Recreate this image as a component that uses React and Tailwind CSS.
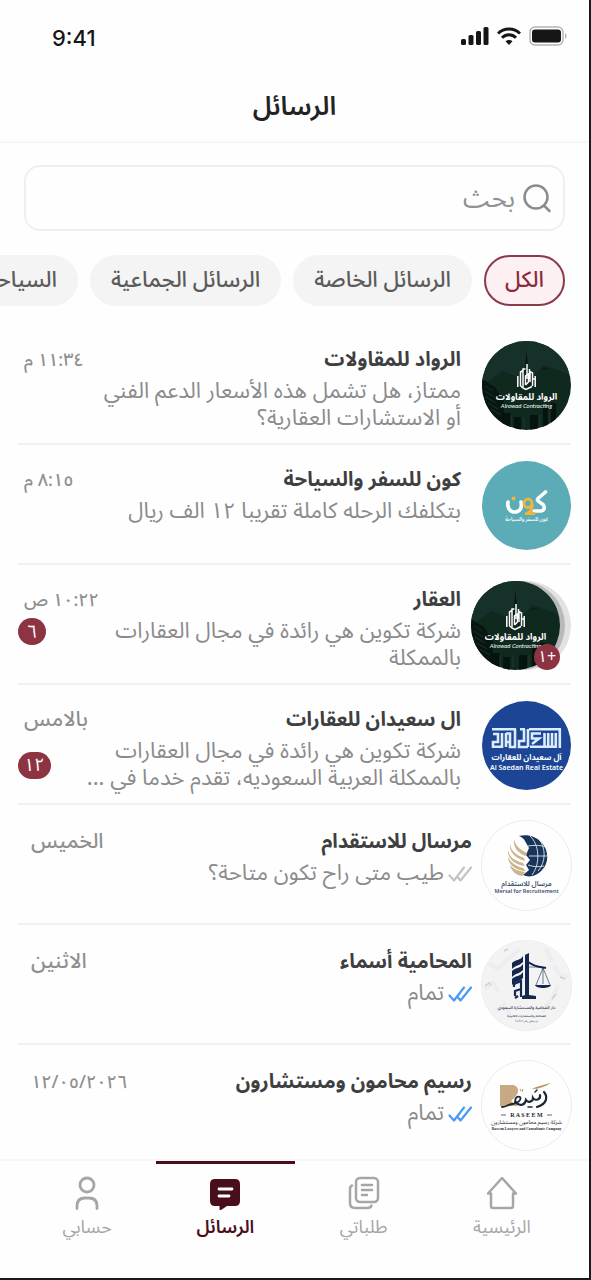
import { useState } from "react";

const filters = ["الكل", "الرسائل الخاصة", "الرسائل الجماعية", "السياحة"];

const RowadArt = () => (
    <>
        <rect width="89" height="89" fill="#10291f" />
        <path d="M0 0h89v34L62 24 47 40 20 30 0 46z" fill="#15312a" />
        <path d="M43 26l1.500-16 1.500 16v18h-3z" fill="#071511" />
        <path d="M38 44V30h13v14z" fill="#0c2019" />
        <path d="M0 38l13 8 9 14v29H0z" fill="#081611" />
        <path d="M3 45l8 5M3 50l9 6M4 56l10 6M6 62l10 6M9 68l10 6" stroke="#22392f" strokeWidth="0.800" />
        <path d="M20 72h9v17h-9zM32 76h7v13h-7zM48 74h8v15h-8zM61 66h5v23h-5zM69 62h5v27h-5z" fill="#07130f" />
        <path d="M29 74v12M42 76v10M58 74v12M67 70v12" stroke="#263f35" strokeWidth="0.800" />
        <path d="M59 29l3-2 2 1 2-1" stroke="#0b1d16" strokeWidth="1.500" fill="none" />
        <g stroke="#fff" strokeWidth="1.500" fill="none">
            <path d="M35.800 46V35M38.500 45V31l2.500-1.500M41 46V28h2.500M45 38V23M53.200 46V35M50.500 45V32l-2.500-1.500V41M47.500 28v10" />
            <path d="M41 47l3 1.500 6-3M43.500 44V35l3-2v8l-3 3M38.500 45l2.500 2M50.500 38h2.500" />
        </g>
        <text x="44.500" y="59" fontSize="9" fontWeight="700" fill="#fff" textAnchor="middle">الرواد للمقاولات</text>
        <text x="44.500" y="67" fontSize="6" fill="#fff" textAnchor="middle" fontFamily="Lato" fontStyle="italic">Alrowad Contracting</text>
    </>
);

const KawnArt = () => (
    <>
        <rect width="89" height="89" fill="#5cacb7" />
        <g fill="none" strokeWidth="3.600" strokeLinecap="round" strokeLinejoin="round">
            <path d="M63.500 31l-7 6c-2 2-1 3 1 4l3.500 2.500c2.500 3 1 6.500-2.500 6.500H52" stroke="#fff" />
            <path d="M26 41c-1 6 2 10 6.500 10s8-3 6.500-10" stroke="#fff" />
            <path d="M50 42.500c0-3-2-4.500-4-4.500s-4 2-4 4.500 2 4 4 4 4-2 4-4c1 5-1 9-6 10h8" stroke="#efb63c" strokeWidth="2.800" />
        </g>
        <circle cx="31.500" cy="37.500" r="2" fill="#efb63c" />
        <text x="44.500" y="60" fontSize="5" fontWeight="600" fill="#fff" textAnchor="middle">كون للسفر والسياحة</text>
    </>
);

const SaedanArt = () => (
    <>
        <rect width="89" height="89" fill="#1c4595" />
        <g fill="none" stroke="#dcecff" strokeWidth="2.600">
            <path d="M10 28.200h24M38 28.200h5M47 28.200h32" />
            <path d="M77.800 28v19M73.800 32v13.800H48M70 32v14M66.200 32v14M62.500 32v14" />
            <path d="M59 32.500h-9v5h7l-7 5.500M46 28v18M42 28v12h-5v6h9" />
            <path d="M33 28v18h-5V32.500h-4M24 32v14M20 32v13.800h-9V41h5v-8h-5M28 41h-4" />
        </g>
        <text x="44.500" y="59" fontSize="8" fontWeight="700" fill="#fff" textAnchor="middle">آل سعيدان للعقارات</text>
        <text x="44.500" y="69" fontSize="7" fontWeight="600" fill="#fff" textAnchor="middle" fontFamily="Noto Sans">Al Saedan Real Estate</text>
    </>
);

const MersalArt = () => (
    <>
        <rect width="89" height="89" fill="#fefefe" />
        <path d="M37 15c8-2 17 0 23 7 7 8 7 20 0 27-5 6-13 8-19 5l6-5-3-5 4-5-4-5 3-7-4-7c-1-2-3-4-6-5z" fill="#17365a" />
        <g stroke="#dfe8ef" strokeWidth="0.900" fill="none">
            <path d="M48 15c9 8 11 27 2 39M46 25c7-1 12-1 18 1M47 35h18M46 44c6 2 11 2 16 1M57 18c7 9 7 23-1 32" />
        </g>
        <g fill="#cbb58c">
            <path d="M32 18c1 6 5 10 13 14l-2 3c-8-4-12-9-11-17z" />
            <path d="M28 23c1 7 6 11 14 14l1 3c-10-3-16-9-15-17z" />
            <path d="M26 29c1 7 7 11 15 13l2 3c-10-1-18-8-17-16z" />
            <path d="M26 36c3 6 8 9 15 11l3 3c-9 0-18-6-18-14z" />
            <path d="M28 44c4 4 8 6 15 7l-3 4c-6-1-11-5-12-11z" />
        </g>
        <text x="44.500" y="65" fontSize="7" fontWeight="600" fill="#3a5068" textAnchor="middle">مرسال للاستقدام</text>
        <text x="44.500" y="72" fontSize="5.400" fontWeight="600" fill="#3a4f72" textAnchor="middle" fontFamily="Noto Sans">Mersal for Recruitement</text>
    </>
);

const LawyerArt = () => (
    <>
        <rect width="89" height="89" fill="#f3f3f4" />
        <g fill="none" stroke="#ededef" strokeWidth="4">
            <path d="M6 22l10 6 8-8 14-12M60 70l10-12 6-14M72 24l6 10 8 2" />
            <path d="M2 48l9-6 5 8M14 70l8-6 6 10M64 8l6 12" />
        </g>
        <path d="M3 45l4-3 2 2M78 36l5 2M70 58l4-5M22 10l4-2" stroke="#cfcfd3" strokeWidth="1.500" fill="none" />
        <g fill="#14284f">
            <path d="M30 22c4-4 8-2 11-7v6c-4 4-7 3-11 7z" />
            <path d="M30 30c4-4 8-2 11-7v6c-4 4-7 3-11 7z" />
            <path d="M30 38c4-4 8-2 11-7v6c-4 4-7 3-11 7z" />
            <path d="M43 14l4-2v42l7 1v3H40v-3l3-1z" />
        </g>
        <g fill="none" stroke="#14284f">
            <path d="M32 46v-3l7-3v8l-6 2v5M39 48v8M33 57l3-2" strokeWidth="2.200" />
            <path d="M46 21c7 5 12 5 18 6" strokeWidth="2" />
            <path d="M61 27l-7 17M61 27l7 17M61 27v16M46 26h14" strokeWidth="0.600" />
        </g>
        <path d="M53 44h16c-1 4-15 4-16 0z" fill="#14284f" />
        <text x="44.500" y="68" fontSize="4" fontWeight="600" fill="#3d4a66" textAnchor="middle">دار المحامية والمستشارة السعودي</text>
        <text x="44.500" y="76" fontSize="3" fontWeight="600" fill="#3d4a66" textAnchor="middle">للمحاماة والاستشارات القانونية</text>
        <text x="44.500" y="81" fontSize="3" fill="#3d4a66" textAnchor="middle">ترخيص رقم ٣٥/١٢</text>
    </>
);

const RaseemArt = () => (
    <>
        <rect width="89" height="89" fill="#fefefe" />
        <path d="M18 24h12c6 0 8 6 4 11l-5 5 7 5H18z" fill="#c7a982" />
        <path d="M50 28c5-3 12-4 19-6-7 4-12 6-19 6z" fill="#b79a62" />
        <g fill="none" stroke="#1d2733" strokeLinecap="round" strokeWidth="2.200">
            <path d="M62 31c4 5 3 12-7 15" />
            <path d="M58 34c1 5-5 6-7 3 0 4-5 5-7 2-1 5-6 7-11 2" />
            <path d="M36 43c-5-3-2-9 2-7 2 3-3 7-8 7-5 1-6 3-10 3" strokeWidth="1.800" />
            <path d="M53 31l2-2M46 46h4" strokeWidth="1.500" />
        </g>
        <path d="M38 28l1 2M41 28l-1 3" stroke="#b79a62" strokeWidth="1" />
        <path d="M19 54h5M65 54h5" stroke="#1d2733" strokeWidth="0.700" />
        <text x="44.500" y="56" fontSize="6" fontWeight="700" fill="#1d2733" textAnchor="middle" fontFamily="Liberation Serif">R A S E E M</text>
        <text x="44.500" y="63" fontSize="5.500" fill="#1d2733" textAnchor="middle">شركة رسيم محامون ومستشارون</text>
        <text x="44.500" y="69" fontSize="3.700" fontWeight="700" fill="#1d2733" textAnchor="middle" fontFamily="Liberation Serif">Raseem Lawyers and Consultants Company</text>
    </>
);

const chats = [
    {
        id: 1,
        name: "الرواد للمقاولات",
        time: "١١:٣٤ م",
        lines: ["ممتاز، هل تشمل هذه الأسعار الدعم الفني", "أو الاستشارات العقارية؟"],
        Art: RowadArt,
    },
    {
        id: 2,
        name: "كون للسفر والسياحة",
        time: "٨:١٥ م",
        lines: ["بتكلفك الرحله كاملة تقريبا ١٢ الف ريال"],
        Art: KawnArt,
    },
    {
        id: 3,
        name: "العقار",
        time: "١٠:٢٢ ص",
        lines: ["شركة تكوين هي رائدة في مجال العقارات", "بالممكلة"],
        unread: "٦",
        group: "+١",
        Art: RowadArt,
    },
    {
        id: 4,
        name: "ال سعيدان للعقارات",
        day: "بالامس",
        lines: ["شركة تكوين هي رائدة في مجال العقارات", "بالممكلة العربية السعوديه، تقدم خدما في ..."],
        unread: "١٢",
        Art: SaedanArt,
    },
    {
        id: 5,
        name: "مرسال للاستقدام",
        day: "الخميس",
        lines: ["طيب متى راح تكون متاحة؟"],
        receipt: "sent",
        Art: MersalArt,
    },
    {
        id: 6,
        name: "المحامية أسماء",
        day: "الاثنين",
        lines: ["تمام"],
        receipt: "read",
        Art: LawyerArt,
    },
    {
        id: 7,
        name: "رسيم محامون ومستشارون",
        time: "١٢/٠٥/٢٠٢٦",
        lines: ["تمام"],
        receipt: "read",
        Art: RaseemArt,
    },
];

const Avatar = ({ Art, outlined }) => (
    <svg
        viewBox="0 0 89 89"
        className={`size-[89px] shrink-0 rounded-full ${outlined ? "ring-1 ring-[#ececec]" : ""}`}
        aria-hidden="true"
    >
        <Art />
    </svg>
);

const GroupAvatar = ({ Art, count }) => (
    <div className="relative flex w-[100px] shrink-0 justify-end">
        <span className="absolute right-0 top-0 size-[89px] rounded-full bg-[#e2e2e2]" />
        <span className="absolute right-[6px] top-0 size-[89px] rounded-full bg-[#b9b9b9]" />
        <div className="relative">
            <Avatar Art={Art} />
            <span className="absolute bottom-0 left-[63px] flex size-[26px] items-center justify-center rounded-full bg-[#8d3443] text-base text-white">
                {count}
            </span>
        </div>
    </div>
);

const Receipt = ({ status }) => (
    <svg
        viewBox="0 0 24 16"
        className={`h-4 w-6 shrink-0 ${status === "read" ? "text-[#4a9af0]" : "text-[#c4c4c4]"}`}
        fill="none"
        stroke="currentColor"
        strokeWidth="2.200"
        strokeLinecap="round"
        strokeLinejoin="round"
        aria-hidden="true"
    >
        <path d="M1.500 9.500l4.500 5L16 1.500M10 11.500l2.500 3L23 1.500" />
    </svg>
);

const ChatRow = ({ chat }) => (
    <li className="h-[120px] border-b-2 border-[#f1f1f1] last:h-[114px] last:border-b-0">
        <a
            href={`#chat-${chat.id}`}
            className={`flex items-start pt-4 ${chat.receipt || chat.group ? "gap-[10px]" : "gap-[21px]"}`}
        >
            {chat.group ? (
                <GroupAvatar Art={chat.Art} count={chat.group} />
            ) : (
                <Avatar Art={chat.Art} outlined={Boolean(chat.receipt)} />
            )}
            <div className={`min-w-0 flex-1 ${chat.receipt ? "pt-[5px]" : "pt-[3px]"}`}>
                <div className="flex h-8 items-center justify-between">
                    <h2 className="whitespace-nowrap text-xl font-bold text-[#3f3f41]">{chat.name}</h2>
                    <time
                        className={`whitespace-nowrap font-medium text-[#8f8f91] ${chat.day ? "text-[21px]" : "text-lg"} ${
                            chat.receipt ? "pl-[13px]" : "pl-[6px]"
                        }`}
                    >
                        {chat.day || chat.time}
                    </time>
                </div>
                <div className="mt-0.5 flex justify-between">
                    <div className="flex items-start gap-1">
                        {chat.receipt && (
                            <span className="flex h-[27px] items-center">
                                <Receipt status={chat.receipt} />
                            </span>
                        )}
                        <p className="whitespace-nowrap text-[22px] leading-[27px] text-[#8b8b8d]">
                            {chat.lines.map((line) => (
                                <span key={line} className="block">{line}</span>
                            ))}
                        </p>
                    </div>
                    {chat.unread && (
                        <span
                            className={`flex h-[27px] min-w-7 items-center justify-center rounded-full bg-[#8d3443] px-[6px] text-lg text-white ${
                                chat.unread.length > 1 ? "self-center" : "self-start"
                            }`}
                        >
                            {chat.unread}
                        </span>
                    )}
                </div>
            </div>
        </a>
    </li>
);

const HomeIcon = () => (
    <svg viewBox="0 0 32 34" className="h-[34px] w-8" fill="none" stroke="currentColor" strokeWidth="2.500" strokeLinejoin="round" strokeLinecap="round">
        <path d="M2 17.500L16 2l14 15.500h-3V30q0 2-2 2H7q-2 0-2-2V17.500z" />
    </svg>
);

const OrdersIcon = () => (
    <svg viewBox="0 0 32 34" className="h-[34px] w-8" fill="none" stroke="currentColor" strokeWidth="2.500" strokeLinecap="round">
        <rect x="8" y="2" width="22" height="24" rx="4" />
        <path d="M4 9.500C2.500 10 2 11 2 13v14q0 5 5 5h12q4 0 4.500-2.500" />
        <path d="M14 9h10M14 14h10M14 19h5" />
    </svg>
);

const MessagesIcon = () => (
    <svg viewBox="0 0 32 34" className="h-[34px] w-8">
        <path d="M6 3h20q5 0 5 5v17q0 5-5 5h-8l-6 4q-1.500.5-1.500-1v-3H6q-5 0-5-5V8q0-5 5-5z" fill="currentColor" />
        <path d="M10 13h13M10 20h10" stroke="#fff" strokeWidth="2.800" strokeLinecap="round" />
    </svg>
);

const AccountIcon = () => (
    <svg viewBox="0 0 32 34" className="h-[34px] w-8" fill="none" stroke="currentColor" strokeWidth="2.800" strokeLinecap="round">
        <circle cx="16" cy="9" r="7" />
        <path d="M6 32.500V30q0-8 8-8h4q8 0 8 8v2.500" />
    </svg>
);

const tabs = [
    { id: "home", label: "الرئيسية", Icon: HomeIcon },
    { id: "orders", label: "طلباتي", Icon: OrdersIcon },
    { id: "messages", label: "الرسائل", Icon: MessagesIcon },
    { id: "account", label: "حسابي", Icon: AccountIcon },
];

const StatusBar = () => (
    <div dir="ltr" className="flex h-[72px] items-center justify-between pl-[52px] pr-[22px] text-[#161616]">
        <span className="pt-1 font-['Inter'] text-[22px] font-medium">9:41</span>
        <div className="flex items-center gap-2">
            <svg viewBox="0 0 28 18" className="h-[18px] w-7" fill="currentColor" aria-hidden="true">
                <rect x="0" y="12" width="5" height="6" rx="1.500" />
                <rect x="7.500" y="8" width="5" height="10" rx="1.500" />
                <rect x="15" y="4" width="5" height="14" rx="1.500" />
                <rect x="22.500" y="0" width="5" height="18" rx="1.500" />
            </svg>
            <svg viewBox="0 0 24 18" className="h-[18px] w-6" fill="none" stroke="currentColor" strokeWidth="3" aria-hidden="true">
                <path d="M1 6.500c6-6 16-6 22 0M5 10.800c4-4 10-4 14 0" />
                <path d="M12 18l-3.500-3.800c2-1.700 5-1.700 7 0z" fill="currentColor" stroke="none" />
            </svg>
            <svg viewBox="0 0 38 20" className="h-5 w-[38px]" aria-hidden="true">
                <rect x="1" y="1" width="33" height="18" rx="5" fill="none" stroke="#b5b5b5" strokeWidth="1.500" />
                <rect x="3" y="3.500" width="29" height="13" rx="3" fill="currentColor" />
                <path d="M36 7c2 .5 2 5.500 0 6z" fill="#b5b5b5" />
            </svg>
        </div>
    </div>
);

const App = () => {
    const [query, setQuery] = useState("");
    const [filter, setFilter] = useState(filters[0]);
    const [tab, setTab] = useState("messages");

    return (
        <div
            dir="rtl"
            className="flex min-h-screen flex-col overflow-hidden border-b-2 border-r-2 border-[#1a1a1a] bg-[#fefefe] font-['Noto_Sans_Arabic','DejaVu_Sans',sans-serif]"
        >
            <header className="border-b-2 border-[#f7f7f7]">
                <StatusBar />
                <h1 className="flex h-[69px] items-center justify-center text-[26px] font-semibold text-[#232323]">الرسائل</h1>
            </header>

            <main className="flex-1">
                <label className="mx-6 mt-[22px] flex h-[66px] items-center gap-2 rounded-2xl border-2 border-[#efefef] px-3">
                    <svg viewBox="0 0 28 30" className="h-[30px] w-7 shrink-0 text-[#8c8c8c]" fill="none" stroke="currentColor" strokeWidth="2.500" strokeLinecap="round" aria-hidden="true">
                        <circle cx="13" cy="14" r="11.500" />
                        <path d="M21.500 23l5 5" />
                    </svg>
                    <input
                        type="search"
                        value={query}
                        onChange={(e) => setQuery(e.target.value)}
                        placeholder="بحث"
                        aria-label="بحث"
                        className="min-w-0 flex-1 bg-transparent text-[26px] text-[#3f3f41] placeholder:text-[#929292] focus:outline-none"
                    />
                </label>

                <div className="mt-6 flex gap-3 overflow-hidden pr-6">
                    {filters.map((item) => (
                        <button
                            key={item}
                            type="button"
                            onClick={() => setFilter(item)}
                            className={`h-[51px] shrink-0 whitespace-nowrap rounded-full border-2 px-[19px] text-[22px] font-medium ${
                                item === filter
                                    ? "border-[#8a3a48] bg-[#fdf0f2] text-[#8a2c3d]"
                                    : "border-transparent bg-[#f4f4f4] text-[#5b5b5b]"
                            }`}
                        >
                            {item}
                        </button>
                    ))}
                </div>

                <ul className="mx-[18px] mt-[19px]">
                    {chats.map((chat) => (
                        <ChatRow key={chat.id} chat={chat} />
                    ))}
                </ul>
            </main>

            <nav className="flex h-[119px] border-t-2 border-[#f7f7f7] px-[18px]">
                {tabs.map(({ id, label, Icon }) => (
                    <button
                        key={id}
                        type="button"
                        onClick={() => setTab(id)}
                        className={`flex flex-1 flex-col items-center border-t-[3px] pt-3 text-lg ${
                            tab === id ? "border-[#4a0e1a] font-semibold text-[#4a0e1a]" : "border-transparent text-[#a6a6a6]"
                        }`}
                    >
                        <Icon />
                        <span className="leading-[34px]">{label}</span>
                    </button>
                ))}
            </nav>
        </div>
    );
};

export default App;
